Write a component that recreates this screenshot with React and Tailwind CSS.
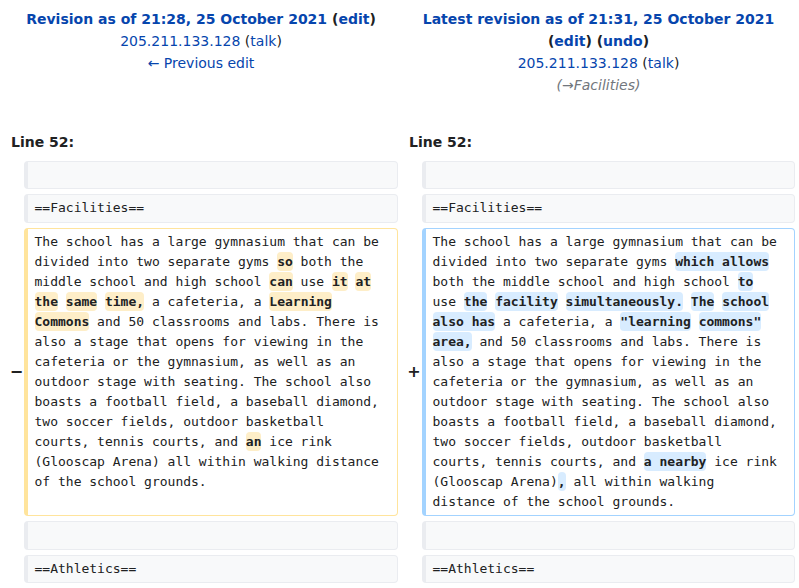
const del = (t) => (
  <span className="font-bold bg-[#feeec8] rounded-[4px] py-[1.75px]">{t}</span>
);
const ins = (t) => (
  <span className="font-bold bg-[#d8ecff] rounded-[4px] py-[1.75px]">{t}</span>
);

function ContextRow({ text }) {
  return (
    <>
      <div></div>
      <div className="bg-[#f8f9fa] border border-[#eaecf0] border-l-4 rounded-[4px] py-[3.25px] pl-[6.5px] pr-[14px] min-h-[28.5px]">
        {text || <br />}
      </div>
      <div></div>
      <div className="bg-[#f8f9fa] border border-[#eaecf0] border-l-4 rounded-[4px] py-[3.25px] pl-[6.5px] pr-[14px] min-h-[28.5px]">
        {text || <br />}
      </div>
    </>
  );
}

export default function App() {
  const sans = { fontFamily: '"DejaVu Sans", sans-serif' };
  return (
    <div className="w-[799px] bg-white text-[#202122] text-[14px] leading-[22px] pt-[8px]" style={sans}>
      {/* Revision headers */}
      <div className="grid grid-cols-[398px_397px]">
        <div className="text-center pl-[4px]">
          <div className="font-bold">
            <a className="text-[#0645ad]">Revision as of 21:28, 25 October 2021</a>{' '}
            (<a className="text-[#0645ad]">edit</a>)
          </div>
          <div>
            <a className="text-[#0645ad]">205.211.133.128</a> (<a className="text-[#0645ad]">talk</a>)
          </div>
          <div>
            <a className="text-[#0645ad]">← Previous edit</a>
          </div>
        </div>
        <div className="text-center pl-[4px]">
          <div className="font-bold">
            <a className="text-[#0645ad]">Latest revision as of 21:31, 25 October 2021</a>{' '}
            (<a className="text-[#0645ad]">edit</a>) (<a className="text-[#0645ad]">undo</a>)
          </div>
          <div>
            <a className="text-[#0645ad]">205.211.133.128</a> (<a className="text-[#0645ad]">talk</a>)
          </div>
          <div className="italic text-[#72777d]">(→Facilities)</div>
        </div>
      </div>

      <div className="grid grid-cols-[398px_397px] mt-[35px] font-bold">
        <div className="pl-[11px]">Line 52:</div>
        <div className="pl-[11px]">Line 52:</div>
      </div>

      {/* Diff body */}
      <div
        className="grid grid-cols-[24px_374px_24px_373px] gap-y-[5px] mt-[7.5px] text-[13px] leading-[20px]"
        style={{ fontFamily: '"DejaVu Sans Mono", monospace' }}
      >
        <ContextRow text="" />
        <ContextRow text="==Facilities==" />

        <div className="flex items-center justify-center pl-[9px] font-bold text-[16px]" style={sans}>−</div>
        <div className="bg-white border border-[#ffe49c] border-l-4 rounded-[4px] py-[3.25px] pl-[6.5px] pr-[14px]">
          The school has a large gymnasium that can be divided into two separate gyms {del('so')} both the middle
          school and high school {del('can')} use {del('it')} {del('at')} {del('the')} {del('same')} {del('time,')} a
          cafeteria, a {del('Learning')} {del('Commons')} and 50 classrooms and labs. There is also a stage that opens
          for viewing in the cafeteria or the gymnasium, as well as an outdoor stage with seating. The school also
          boasts a football field, a baseball diamond, two soccer fields, outdoor basketball courts, tennis courts, and{' '}
          {del('an')} ice rink (Glooscap Arena) all within walking distance of the school grounds.
        </div>
        <div className="flex items-center justify-center pl-[8px] font-bold text-[16px]" style={sans}>+</div>
        <div className="bg-white border border-[#a3d3ff] border-l-4 rounded-[4px] py-[3.25px] pl-[6.5px] pr-[14px]">
          The school has a large gymnasium that can be divided into two separate gyms {ins('which allows')} both the
          middle school and high school {ins('to')} use {ins('the')} {ins('facility')} {ins('simultaneously.')}{' '}
          {ins('The')} {ins('school')} {ins('also has')} a cafeteria, a {ins('"learning')} {ins('commons"')}{' '}
          {ins('area,')} and 50 classrooms and labs. There is also a stage that opens for viewing in the cafeteria or
          the gymnasium, as well as an outdoor stage with seating. The school also boasts a football field, a baseball
          diamond, two soccer fields, outdoor basketball courts, tennis courts, and {ins('a nearby')} ice rink
          (Glooscap Arena){ins(',')} all within walking distance of the school grounds.
        </div>

        <ContextRow text="" />
        <ContextRow text="==Athletics==" />
      </div>
    </div>
  );
}
